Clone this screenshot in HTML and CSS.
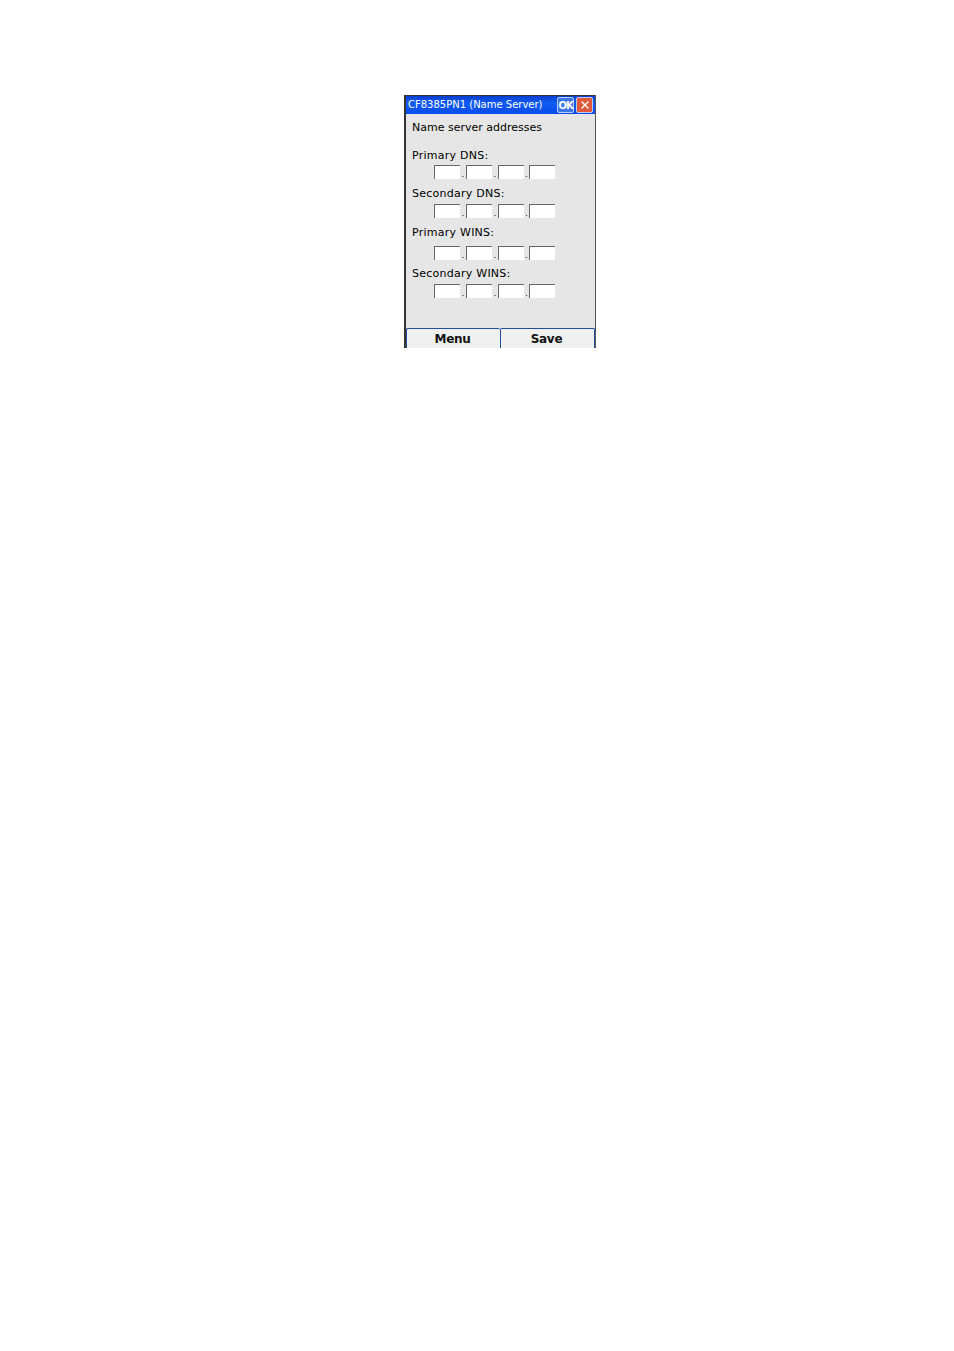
FILE: index.html
```html
<!DOCTYPE html>
<html lang="en">
<head>
    <meta charset="UTF-8">
    <meta name="viewport" content="width=device-width, initial-scale=1.0">
    <title>CF8385PN1 (Name Server)</title>
    <link rel="stylesheet" href="styles.css">
</head>
<body>
    <div class="win">
        <div class="titlebar">
            <span class="title">CF8385PN1 (Name Server)</span>
            <span class="tbtn ok">OK</span>
            <span class="tbtn close">
                <svg width="10" height="10" viewBox="0 0 10 10"><path d="M1.5 1.5l7 7M8.5 1.5l-7 7" stroke="#fff" stroke-width="1.4" fill="none"/></svg>
            </span>
        </div>

        <div class="content">
            <p class="head">Name server addresses</p>

            <p class="lab lab1">Primary DNS:</p>
            <div class="ip ip1">
                <span class="box"></span><i>.</i><span class="box"></span><i>.</i><span class="box"></span><i class="last">.</i><span class="box"></span>
            </div>

            <p class="lab">Secondary DNS:</p>
            <div class="ip">
                <span class="box"></span><i>.</i><span class="box"></span><i>.</i><span class="box"></span><i class="last">.</i><span class="box"></span>
            </div>

            <p class="lab">Primary WINS:</p>
            <div class="ip ip3">
                <span class="box"></span><i>.</i><span class="box"></span><i>.</i><span class="box"></span><i class="last">.</i><span class="box"></span>
            </div>

            <p class="lab lab4">Secondary WINS:</p>
            <div class="ip">
                <span class="box"></span><i>.</i><span class="box"></span><i>.</i><span class="box"></span><i class="last">.</i><span class="box"></span>
            </div>
        </div>

        <div class="softkeys">
            <div class="key">Menu</div>
            <div class="key">Save</div>
        </div>
    </div>
</body>
</html>
```

FILE: styles.css
```css
body {
    margin: 0;
    background: #fff;
    font-family: "DejaVu Sans", sans-serif;
}

/* device window */
.win {
    width: 189px;
    height: 253px;
    margin: 95px 0 0 404px;
    border-left: 2px solid #333;
    border-right: 1px solid #555;
    background: #e6e6e6;
    display: flex;
    flex-direction: column;
}

/* title bar */
.titlebar {
    height: 19px;
    box-sizing: border-box;
    border-top: 1px solid #333;
    background: linear-gradient(#0a3fd0, #0f5cf5 40%, #0a4be8);
    display: flex;
    align-items: center;
    padding: 0 0 2px 2px;
    flex-shrink: 0;
}

.title {
    flex: 1;
    color: #fff;
    font-size: 10px;
    white-space: nowrap;
}

.tbtn {
    width: 17px;
    height: 16px;
    margin: 0 2px -2px 0;
    border: 1px solid #b9ccf5;
    border-radius: 2px;
    box-sizing: border-box;
    display: flex;
    align-items: center;
    justify-content: center;
    color: #fff;
    font-size: 10px;
    font-weight: bold;
}

.ok {
    background: #3f76e8;
    letter-spacing: -1px;
}

.close {
    background: #e0593a;
}

/* form */
.content {
    flex: 1;
    padding-left: 6px;
    font-size: 11px;
    color: #000;
}

.content p {
    margin: 0;
    line-height: 14px;
}

.head {
    padding-top: 7px;
}

.content .lab {
    margin-top: 8px;
    letter-spacing: 0.25px;
}

.content .lab1 {
    margin-top: 14px;
}

.content .lab4 {
    margin-top: 7px;
}

.ip {
    display: flex;
    margin: 3px 0 0 22px;
    height: 14px;
}

.ip1 {
    margin-top: 2px;
}

.ip3 {
    margin-top: 6px;
}

.box {
    width: 26px;
    height: 14px;
    box-sizing: border-box;
    background: #fff;
    border-top: 1px solid #666;
    border-left: 1px solid #666;
}

/* dots between the boxes */
.ip i {
    width: 6px;
    font-style: normal;
    font-size: 9px;
    line-height: 18px;
    text-align: center;
    color: #222;
}

.ip .last {
    width: 5px;
}

/* bottom buttons */
.softkeys {
    height: 20px;
    display: flex;
    flex-shrink: 0;
}

.key {
    flex: 1;
    box-sizing: border-box;
    background: #f0f0f0;
    border-top: 1px solid #1d4f9c;
    border-left: 1px solid #1d4f9c;
    border-radius: 2px 2px 0 0;
    padding-right: 2px;
    text-align: center;
    font-size: 12px;
    font-weight: bold;
    letter-spacing: -0.3px;
    line-height: 20px;
    color: #111;
}

.key:last-child {
    border-right: 1px solid #1d4f9c;
}
```
